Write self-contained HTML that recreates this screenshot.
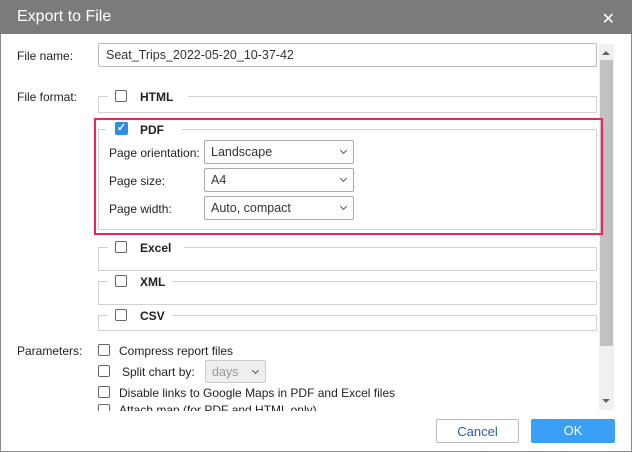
<!DOCTYPE html>
<html><head><style>
*{box-sizing:border-box;margin:0;padding:0}
body{width:632px;height:452px;background:#fff;font-family:"Liberation Sans",Arial,sans-serif;font-size:12px;color:#222;position:relative;overflow:hidden}
.a{position:absolute}
.frame{left:0;top:0;width:632px;height:452px;border:1px solid #8a8a8a}
.title{left:0;top:0;width:632px;height:34px;background:#7b7b7b;color:#fff;font-size:16px;line-height:34px;padding-left:17px}
.x{right:17px;top:9px;color:#fff;font-size:16px;font-weight:300}
.inp{border:1px solid #b9b9b9;border-radius:2px;background:#fff;padding-left:7px;line-height:22px;font-size:12.5px;color:#333}
.cb{width:12px;height:12px;border:1px solid #666;border-radius:2px;background:#fff}
.fs{border:1px solid #d2d2d2}
.lg{background:#fff;font-weight:bold;padding:0 6px}
.sel{border:1px solid #aaa;border-radius:2px;padding-left:6px;line-height:23px;font-size:12.5px;color:#333}
.sel:after{content:"";position:absolute;right:7px;top:7px;width:4px;height:4px;border-right:1.3px solid #555;border-bottom:1.3px solid #555;transform:rotate(45deg)}
.btn{text-align:center;line-height:24px;font-size:13px;border-radius:2px}
</style></head><body>
<div class="a frame"></div>
<div class="a title">Export to File</div>
<div class="a x">✕</div>
<div class="a" style="left:17px;top:49px">File name:</div>
<div class="a inp" style="left:98px;top:43px;width:499px;height:24px">Seat_Trips_2022-05-20_10-37-42</div>
<div class="a" style="left:599px;top:44px;width:15px;height:366px;background:#f0f0f0"></div>
<div class="a" style="left:600px;top:60px;width:13px;height:286px;background:#c1c1c1"></div>
<div class="a" style="left:602px;top:51px;width:0;height:0;border:4px solid transparent;border-bottom:4px solid #666;border-top:0"></div>
<div class="a" style="left:602px;top:399px;width:0;height:0;border:4px solid transparent;border-top:4px solid #666;border-bottom:0"></div>
<div class="a" style="left:17px;top:90px">File format:</div>
<!-- HTML -->
<div class="a fs" style="left:98px;top:96px;width:499px;height:17px"></div>
<div class="a lg" style="left:108px;top:89px;width:80px;height:14px"></div>
<div class="a cb" style="left:115px;top:90px"></div>
<div class="a" style="left:140px;top:90px;font-weight:bold">HTML</div>
<!-- PDF -->
<div class="a" style="left:94px;top:118px;width:509px;height:117px;border:2px solid #f0245a"></div>
<div class="a fs" style="left:98px;top:129px;width:499px;height:101px"></div>
<div class="a lg" style="left:106px;top:122px;width:76px;height:14px"></div>
<div class="a" style="left:115px;top:122px;width:13px;height:13px;background:#2f8de4;border-radius:2px;color:#fff;font-size:11px;line-height:13px;text-align:center;font-weight:bold">✓</div>
<div class="a" style="left:140px;top:123px;font-weight:bold">PDF</div>
<div class="a" style="left:109px;top:146px">Page orientation:</div>
<div class="a sel" style="left:204px;top:140px;width:150px;height:24px">Landscape</div>
<div class="a" style="left:109px;top:174px">Page size:</div>
<div class="a sel" style="left:204px;top:168px;width:150px;height:24px">A4</div>
<div class="a" style="left:109px;top:202px">Page width:</div>
<div class="a sel" style="left:204px;top:196px;width:150px;height:24px">Auto, compact</div>
<!-- Excel -->
<div class="a fs" style="left:98px;top:247px;width:499px;height:24px"></div>
<div class="a lg" style="left:108px;top:240px;width:76px;height:14px"></div>
<div class="a cb" style="left:115px;top:241px"></div>
<div class="a" style="left:140px;top:241px;font-weight:bold">Excel</div>
<!-- XML -->
<div class="a fs" style="left:98px;top:281px;width:499px;height:24px"></div>
<div class="a lg" style="left:108px;top:274px;width:64px;height:14px"></div>
<div class="a cb" style="left:115px;top:275px"></div>
<div class="a" style="left:140px;top:275px;font-weight:bold">XML</div>
<!-- CSV -->
<div class="a fs" style="left:98px;top:315px;width:499px;height:16px;border-bottom:none"></div>
<div class="a" style="left:98px;top:330px;width:499px;height:1px;background:#d2d2d2"></div>
<div class="a lg" style="left:108px;top:308px;width:64px;height:14px"></div>
<div class="a cb" style="left:115px;top:309px"></div>
<div class="a" style="left:140px;top:309px;font-weight:bold">CSV</div>
<!-- Params -->
<div class="a" style="left:17px;top:344px">Parameters:</div>
<div class="a cb" style="left:98px;top:344px"></div>
<div class="a" style="left:119px;top:344px">Compress report files</div>
<div class="a cb" style="left:98px;top:365px"></div>
<div class="a" style="left:122px;top:365px">Split chart by:</div>
<div class="a sel" style="left:205px;top:360px;width:61px;height:23px;background:#eee;color:#999;border-color:#ccc">days</div>
<div class="a cb" style="left:98px;top:386px"></div>
<div class="a" style="left:119px;top:386px">Disable links to Google Maps in PDF and Excel files</div>
<div class="a" style="left:0;top:403px;width:597px;height:8px;overflow:hidden">
<div class="a cb" style="left:98px;top:1px"></div>
<div class="a" style="left:119px;top:0px">Attach map (for PDF and HTML only)</div></div>
<div class="a btn" style="left:436px;top:419px;width:83px;height:24px;border:1px solid #bbb;color:#2a5d9a">Cancel</div>
<div class="a btn" style="left:531px;top:419px;width:84px;height:24px;background:#3aa0f5;color:#fff">OK</div>
</body></html>
